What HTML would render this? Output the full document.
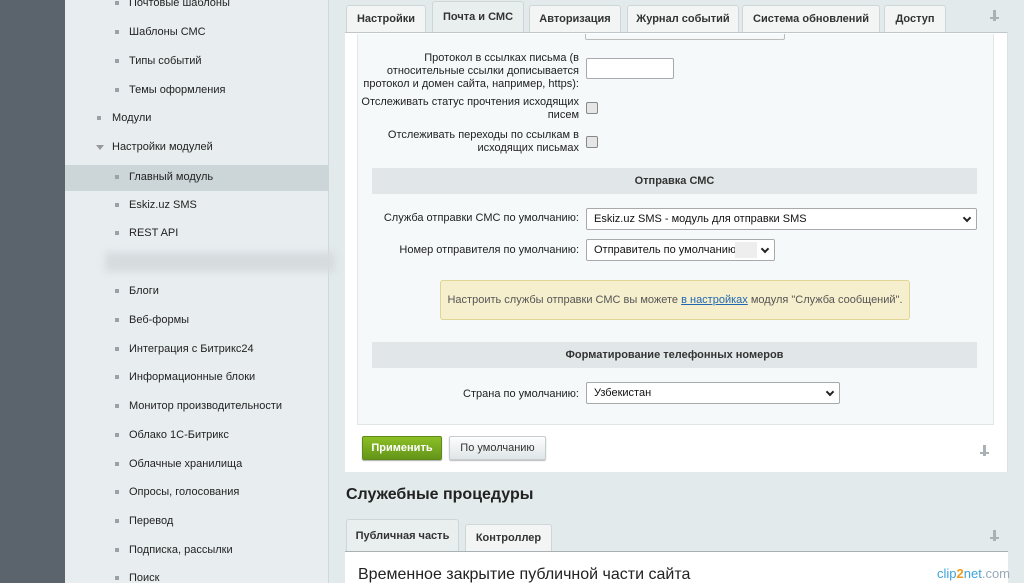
<!DOCTYPE html>
<html style="width:1024px;height:583px;overflow:hidden;background:#e3eaec"><head><meta charset="utf-8"><style>
*{margin:0;padding:0;box-sizing:border-box}
body{width:1024px;height:583px;overflow:hidden;position:relative;background:#e3eaec;font-family:"Liberation Sans",Arial,sans-serif;font-size:11px;color:#000}
.a{position:absolute}
#dark{left:0;top:0;width:65px;height:583px;background:#5b636d}
#side{left:65px;top:0;width:264px;height:583px;background:#e8eef0;border-right:1px solid #d0d8da}
.mi{position:absolute;left:0;width:264px;height:29px;line-height:29px;font-size:11px;color:#222}
.mi .b{position:absolute;top:12px;width:4px;height:4px;background:#9aa2a8}
.sel{background:#ccd6d9}
.tab{position:absolute;top:5px;height:27px;background:#f3f5f5;border:1px solid #cfd6d8;border-bottom:none;border-radius:3px 3px 0 0;line-height:26px;text-align:center;font-weight:bold;color:#333;font-size:11px}
.tab.on{top:1px;height:32px;background:#e9eeef;line-height:30px}
.lbl{position:absolute;text-align:right;color:#222;font-size:11px;line-height:13px}
.sel2{position:absolute;height:22px;background:#fff;border:1px solid #a6aaad;border-radius:2px;line-height:20px;padding-left:7px;font-size:11px;color:#111}
.sel2:after{content:"";position:absolute;right:6px;top:6px;width:4px;height:4px;border-right:2px solid #222;border-bottom:2px solid #222;transform:rotate(45deg)}
.cb{position:absolute;width:12px;height:12px;border:1px solid #888;border-radius:2px;background:#e6e6e6}
.hdr{position:absolute;left:372px;width:605px;height:26px;background:#e1e7e9;text-align:center;line-height:26px;font-weight:bold;color:#333}
.pin{position:absolute;width:3px;height:11px;background:#a9b1b5}
.pin:before{content:"";position:absolute;left:-3px;top:7px;width:9px;height:2px;background:#a9b1b5}
</style></head><body>
<div id="dark" class="a"></div>
<div id="side" class="a">
<div class="mi" style="top:-11px"><span class="b" style="left:50px"></span><span style="position:absolute;left:64px">Почтовые шаблоны</span></div>
<div class="mi" style="top:18px"><span class="b" style="left:50px"></span><span style="position:absolute;left:64px">Шаблоны СМС</span></div>
<div class="mi" style="top:47px"><span class="b" style="left:50px"></span><span style="position:absolute;left:64px">Типы событий</span></div>
<div class="mi" style="top:76px"><span class="b" style="left:50px"></span><span style="position:absolute;left:64px">Темы оформления</span></div>
<div class="mi" style="top:104px"><span class="b" style="left:32px"></span><span style="position:absolute;left:47px">Модули</span></div>
<div class="mi" style="top:133px"><span style="position:absolute;left:31px;top:12px;border:4px solid transparent;border-top:5px solid #999;border-bottom:0"></span><span style="position:absolute;left:47px">Настройки модулей</span></div>
<div class="mi sel" style="top:165px;height:26px;line-height:24px"><span class="b" style="left:50px;top:10px"></span><span style="position:absolute;left:64px">Главный модуль</span></div>
<div class="mi" style="top:191px"><span class="b" style="left:50px"></span><span style="position:absolute;left:64px">Eskiz.uz SMS</span></div>
<div class="mi" style="top:219px"><span class="b" style="left:50px"></span><span style="position:absolute;left:64px">REST API</span></div>
<div style="position:absolute;left:40px;top:252px;width:230px;height:20px;background:#d6dcde;filter:blur(4px)"></div>
<div class="mi" style="top:277px"><span class="b" style="left:50px"></span><span style="position:absolute;left:64px">Блоги</span></div>
<div class="mi" style="top:306px"><span class="b" style="left:50px"></span><span style="position:absolute;left:64px">Веб-формы</span></div>
<div class="mi" style="top:335px"><span class="b" style="left:50px"></span><span style="position:absolute;left:64px">Интеграция с Битрикс24</span></div>
<div class="mi" style="top:363px"><span class="b" style="left:50px"></span><span style="position:absolute;left:64px">Информационные блоки</span></div>
<div class="mi" style="top:392px"><span class="b" style="left:50px"></span><span style="position:absolute;left:64px">Монитор производительности</span></div>
<div class="mi" style="top:421px"><span class="b" style="left:50px"></span><span style="position:absolute;left:64px">Облако 1С-Битрикс</span></div>
<div class="mi" style="top:450px"><span class="b" style="left:50px"></span><span style="position:absolute;left:64px">Облачные хранилища</span></div>
<div class="mi" style="top:478px"><span class="b" style="left:50px"></span><span style="position:absolute;left:64px">Опросы, голосования</span></div>
<div class="mi" style="top:507px"><span class="b" style="left:50px"></span><span style="position:absolute;left:64px">Перевод</span></div>
<div class="mi" style="top:536px"><span class="b" style="left:50px"></span><span style="position:absolute;left:64px">Подписка, рассылки</span></div>
<div class="mi" style="top:564px"><span class="b" style="left:50px"></span><span style="position:absolute;left:64px">Поиск</span></div>
</div>

<div class="tab" style="left:346px;width:80px">Настройки</div>
<div class="tab on" style="left:432px;width:92px">Почта и СМС</div>
<div class="tab" style="left:529px;width:92px">Авторизация</div>
<div class="tab" style="left:627px;width:112px">Журнал событий</div>
<div class="tab" style="left:742px;width:138px">Система обновлений</div>
<div class="tab" style="left:884px;width:62px">Доступ</div>
<div class="pin" style="left:993px;top:10px"></div>

<div class="a" style="left:345px;top:32px;width:663px;height:440px;background:#fff;border-top:1px solid #bfc7ca;border-right:1px solid #dce2e4"></div>
<div class="a" style="left:357px;top:34px;width:637px;height:391px;background:#f5f9f9;border:1px solid #e1e6e8;border-top:none"></div>
<div class="a" style="left:585px;top:34px;width:200px;height:6px;border:1px solid #bbb;border-top:none;border-radius:0 0 2px 2px"></div>

<div class="lbl" style="left:360px;width:219px;top:52px">Протокол в ссылках письма (в относительные ссылки дописывается протокол и домен сайта, например, https):</div>
<div class="a" style="left:586px;top:58px;width:88px;height:21px;background:#fff;border:1px solid #a6aaad;border-radius:2px"></div>
<div class="lbl" style="left:360px;width:219px;top:96px">Отслеживать статус прочтения исходящих писем</div>
<div class="cb" style="left:586px;top:102px"></div>
<div class="lbl" style="left:360px;width:219px;top:129px">Отслеживать переходы по ссылкам в исходящих письмах</div>
<div class="cb" style="left:586px;top:136px"></div>

<div class="hdr" style="top:168px">Отправка СМС</div>
<div class="lbl" style="left:360px;width:219px;top:212px">Служба отправки СМС по умолчанию:</div>
<div class="sel2" style="left:586px;top:208px;width:391px">Eskiz.uz SMS - модуль для отправки SMS</div>
<div class="lbl" style="left:360px;width:219px;top:244px">Номер отправителя по умолчанию:</div>
<div class="sel2" style="left:586px;top:239px;width:189px">Отправитель по умолчанию</div>
<div class="a" style="left:735px;top:242px;width:22px;height:16px;background:#eee"></div>

<div class="a" style="left:440px;top:280px;width:470px;height:40px;background:#f5efcd;border:1px solid #e0d595;border-radius:3px;line-height:38px;text-align:center;color:#555;font-size:11px">Настроить службы отправки СМС вы можете <span style="color:#2067b0;text-decoration:underline">в настройках</span> модуля "Служба сообщений".</div>

<div class="hdr" style="top:342px">Форматирование телефонных номеров</div>
<div class="lbl" style="left:360px;width:219px;top:388px">Страна по умолчанию:</div>
<div class="sel2" style="left:586px;top:382px;width:254px">Узбекистан</div>

<div class="a" style="left:362px;top:436px;width:80px;height:24px;background:linear-gradient(#8cbf26,#64951a);border:1px solid #5e8a17;border-radius:2px;color:#fff;font-weight:bold;text-align:center;line-height:22px;box-shadow:0 1px 1px #aaa">Применить</div>
<div class="a" style="left:449px;top:436px;width:97px;height:24px;background:linear-gradient(#fdfefe,#dfe5e8);border:1px solid #c5cdd0;border-radius:2px;color:#333;text-align:center;line-height:22px;box-shadow:0 1px 1px #bbb">По умолчанию</div>
<div class="pin" style="left:983px;top:445px"></div>

<div class="a" style="left:346px;top:486px;font-size:16px;font-weight:bold;color:#222">Служебные процедуры</div>
<div class="tab on" style="left:346px;top:519px;width:113px;height:32px;line-height:32px">Публичная часть</div>
<div class="tab" style="left:465px;top:524px;width:87px;height:27px;line-height:26px">Контроллер</div>
<div class="pin" style="left:993px;top:530px"></div>
<div class="a" style="left:345px;top:551px;width:663px;height:32px;background:#fff;border-top:1px solid #a9b1b5"></div>
<div class="a" style="left:358px;top:566px;font-size:16px;color:#222">Временное закрытие публичной части сайта</div>
<div class="a" style="left:937px;top:566px;font-size:13px;color:#3ba3d8">clip<span style="color:#f29b1f;font-weight:bold">2</span>net<span style="color:#9ab">.com</span></div>
</body></html>
